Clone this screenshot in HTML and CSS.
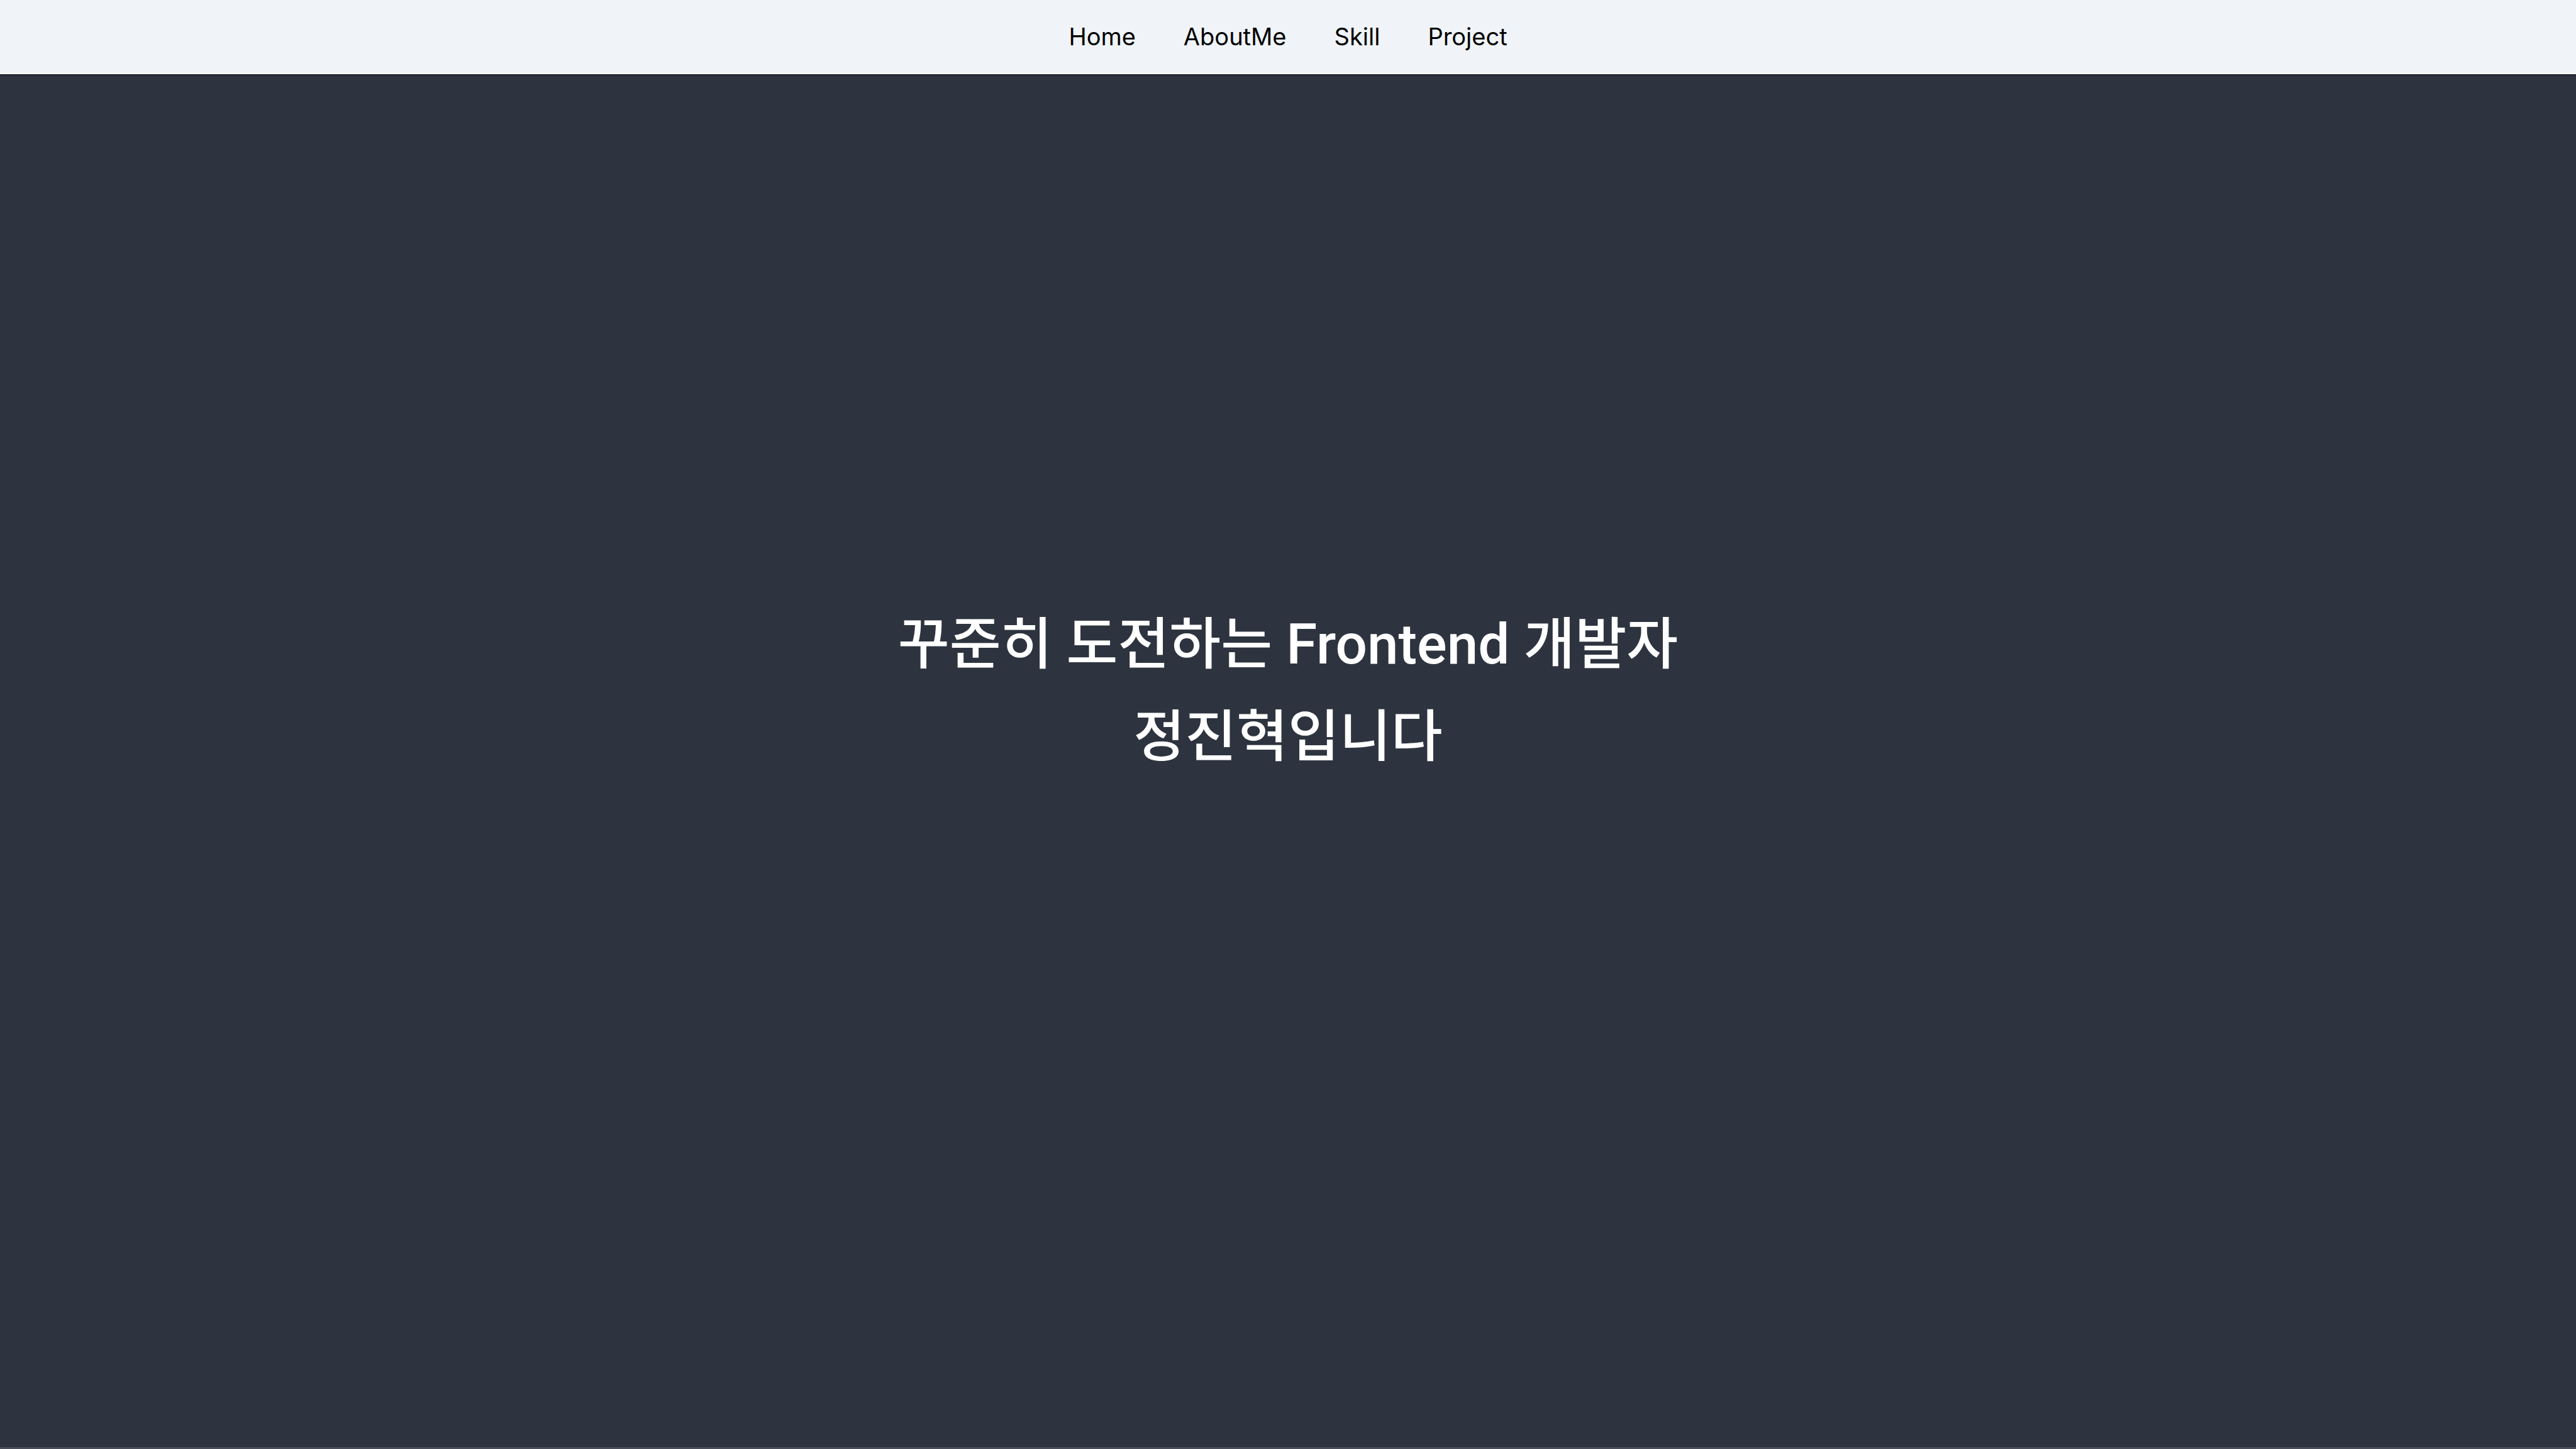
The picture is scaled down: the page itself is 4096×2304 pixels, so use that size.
FILE: index.html
```html
<!DOCTYPE html>
<html lang="ko">
<head>
  <meta charset="utf-8">
  <meta name="viewport" content="width=device-width, initial-scale=1">
  <title>정진혁</title>
  <link rel="stylesheet" href="styles.css">
</head>
<body>
  <header class="site-header">
    <nav class="site-nav">
      <a class="nav-link" href="#home">Home</a>
      <a class="nav-link" href="#about">AboutMe</a>
      <a class="nav-link" href="#skill">Skill</a>
      <a class="nav-link" href="#project">Project</a>
    </nav>
  </header>
  <main class="hero" id="home">
    <h1 class="hero-title">꾸준히 도전하는 Frontend 개발자<br>정진혁입니다</h1>
  </main>
</body>
</html>
```

FILE: styles.css
```css
* {
  box-sizing: border-box;
}

body {
  display: flex;
  flex-direction: column;
  min-height: 100vh;
  margin: 0;
  background: #2e343f;
  font-family: Roboto, "Noto Sans CJK KR", sans-serif;
}

.site-header {
  padding: 32px 40px;
  background: #f0f4f9;
  border-bottom: 2px solid #ffffff;
}

.site-nav {
  display: flex;
  justify-content: center;
  gap: 76px;
}

.nav-link {
  color: #000000;
  font-family: Inter, "Noto Sans CJK KR", sans-serif;
  font-size: 38px;
  line-height: 52px;
  text-decoration: none;
}

.hero {
  flex: 1;
  display: flex;
  align-items: center;
  justify-content: center;
  padding: 0 40px 226px;
  border-top: 2px solid #1c2029;
  border-bottom: 3px solid #4a4c58;
}

.hero-title {
  margin: 0;
  color: #ffffff;
  font-size: 89px;
  font-weight: 500;
  line-height: 147px;
  text-align: center;
}
```
